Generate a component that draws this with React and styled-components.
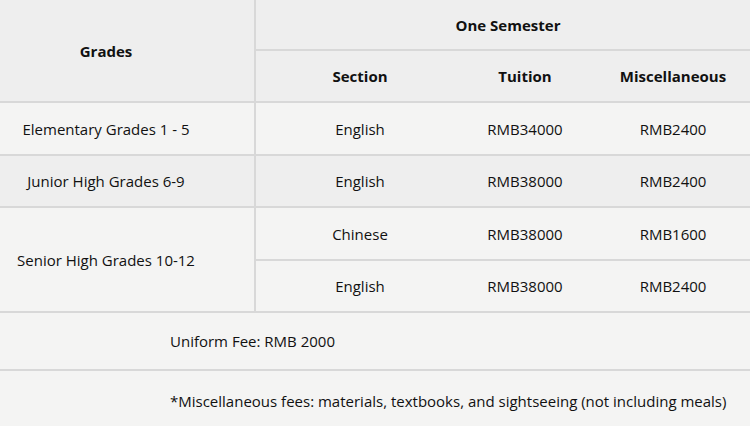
import React from 'react';
import styled, { createGlobalStyle } from 'styled-components';

const GlobalStyle = createGlobalStyle`
  html, body {
    margin: 0;
    padding: 0;
    background: #f3f3f2;
    overflow: hidden;
  }
`;

const Frame = styled.div`
  width: 750px;
  height: 426px;
  overflow: hidden;
  background: #f3f3f2;
  font-family: "Open Sans", "Noto Sans", sans-serif;
  font-size: 15px;
  color: #111;
`;

const Table = styled.table`
  width: 760px;
  border-collapse: collapse;
  table-layout: fixed;
`;

const Row = styled.tr`
  background: ${props => (props.shade ? '#eeeeee' : '#f4f4f3')};
`;

const HeadCell = styled.th`
  font-weight: 700;
  text-align: center;
  vertical-align: middle;
  height: ${props => props.h || 50}px;
  padding: 0 ${props => props.pr || 0}px 0 0;
  border: 2px solid #d8d8d8;
  border-top: none;
  border-left: none;
  border-right: ${props => (props.divider ? '2px solid #d8d8d8' : 'none')};
`;

const Cell = styled.td`
  text-align: center;
  vertical-align: middle;
  height: ${props => props.h || 50}px;
  padding: 0 ${props => props.pr || 0}px 0 0;
  border-bottom: 2px solid #d8d8d8;
  border-right: ${props => (props.divider ? '2px solid #d8d8d8' : 'none')};
`;

const NoteCell = styled.td`
  text-align: left;
  vertical-align: middle;
  height: ${props => props.h}px;
  padding: 0 0 0 170px;
  border-bottom: ${props => (props.last ? 'none' : '2px solid #d8d8d8')};
`;

const fees = [
  { grade: 'Elementary Grades 1 - 5', section: 'English', tuition: 'RMB34000', misc: 'RMB2400', h: 51 },
  { grade: 'Junior High Grades 6-9', section: 'English', tuition: 'RMB38000', misc: 'RMB2400', h: 50, shade: true },
];

const App = () => (
  <Frame>
    <GlobalStyle />
    <Table>
      <colgroup>
        <col style={{ width: 255 }} />
        <col style={{ width: 209 }} />
        <col style={{ width: 122 }} />
        <col style={{ width: 174 }} />
      </colgroup>
      <thead>
        <Row shade>
          <HeadCell rowSpan={2} divider pr={42} h={49}>Grades</HeadCell>
          <HeadCell colSpan={3} h={49}>One Semester</HeadCell>
        </Row>
        <Row shade>
          <HeadCell h={50}>Section</HeadCell>
          <HeadCell h={50}>Tuition</HeadCell>
          <HeadCell h={50}>Miscellaneous</HeadCell>
        </Row>
      </thead>
      <tbody>
        {fees.map(f => (
          <Row key={f.grade} shade={f.shade}>
            <Cell divider pr={42} h={f.h}>{f.grade}</Cell>
            <Cell h={f.h}>{f.section}</Cell>
            <Cell h={f.h}>{f.tuition}</Cell>
            <Cell h={f.h}>{f.misc}</Cell>
          </Row>
        ))}
        <Row>
          <Cell rowSpan={2} divider pr={42}>Senior High Grades 10-12</Cell>
          <Cell h={51}>Chinese</Cell>
          <Cell h={51}>RMB38000</Cell>
          <Cell h={51}>RMB1600</Cell>
        </Row>
        <Row>
          <Cell>English</Cell>
          <Cell>RMB38000</Cell>
          <Cell>RMB2400</Cell>
        </Row>
        <Row>
          <NoteCell colSpan={4} h={56}>Uniform Fee: RMB 2000</NoteCell>
        </Row>
        <Row>
          <NoteCell colSpan={4} h={60} last>
            *Miscellaneous fees: materials, textbooks, and sightseeing (not including meals)
          </NoteCell>
        </Row>
      </tbody>
    </Table>
  </Frame>
);

export default App;
